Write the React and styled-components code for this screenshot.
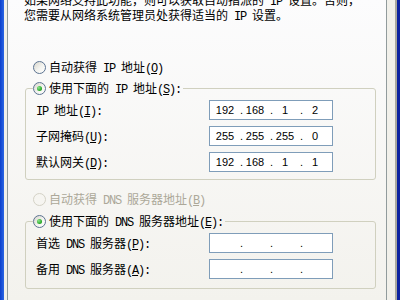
import React from 'react';
import styled, { createGlobalStyle } from 'styled-components';

const GlobalStyle = createGlobalStyle`
  html, body {
    margin: 0;
    padding: 0;
  }
  body {
    width: 400px;
    height: 300px;
    overflow: hidden;
    background: #ece9d8;
  }
`;

const Screen = styled.div`
  display: flex;
  width: 400px;
  height: 300px;
  overflow: hidden;
  font-family: 'Noto Sans CJK SC', sans-serif;
  font-size: 12px;
  color: #000;
`;

const FrameLeft = styled.div`
  flex: none;
  width: 4px;
  background: linear-gradient(to right, #0b3fcc, #2b66e4);
`;

const FrameRight = styled.div`
  flex: none;
  width: 3px;
  background: #0c22a0;
`;

const Gutter = styled.div`
  flex: none;
  width: ${({ $w }) => $w}px;
  background: #f1f0ea;
  border-right: ${({ $shadow }) => ($shadow ? '2px solid #a9a89f' : 'none')};
`;

const Panel = styled.div`
  flex: 1;
  min-width: 0;
  padding: 0 10px 0 16px;
  border-left: 1px solid #919b9c;
  border-right: 1px solid #919b9c;
  background: linear-gradient(to bottom, #fcfcfd, #f3f2ed);
  overflow: hidden;
`;

const Intro = styled.p`
  margin: -7px 0 0;
  line-height: 13px;
  white-space: nowrap;
`;

const Lt = styled.span`
  font-family: 'Liberation Mono', monospace;
  font-size: 12px;
  letter-spacing: -1.2px;
  line-height: 1;
  white-space: pre;
`;

const RadioRow = styled.div`
  display: flex;
  align-items: center;
  height: 14px;
  line-height: 14px;
  white-space: nowrap;
  margin: ${({ $mt }) => $mt || 0}px 0 0 ${({ $ml }) => $ml || 0}px;
  color: ${({ $disabled }) => ($disabled ? '#aca899' : '#000')};
`;

const Circle = styled.span`
  flex: none;
  display: flex;
  align-items: center;
  justify-content: center;
  box-sizing: border-box;
  width: 13px;
  height: 13px;
  margin-right: 3px;
  border-radius: 50%;
  border: 1px solid ${({ $disabled }) => ($disabled ? '#d4d2c6' : '#5c7391')};
  background: ${({ $disabled }) =>
    $disabled ? '#f6f5f1' : 'linear-gradient(135deg, #d8d6cc 0%, #f4f4f0 55%, #ffffff 100%)'};

  &::after {
    content: '';
    display: ${({ $checked }) => ($checked ? 'block' : 'none')};
    width: 5px;
    height: 5px;
    border-radius: 50%;
    background: radial-gradient(circle at 35% 35%, #8ae68a, #22a322 70%);
  }
`;

const Group = styled.fieldset`
  margin: ${({ $mt }) => $mt}px 0 0 1px;
  padding: 5px 0 ${({ $pb }) => $pb}px 7px;
  min-width: 0;
  border: 1px solid #d0d0bf;
  border-radius: 3px;
`;

const Legend = styled.legend`
  padding: 0 2px 0 0;
  margin: 0;
`;

const Grid = styled.div`
  display: grid;
  grid-template-columns: 173px 124px;
  row-gap: 6px;
  align-items: center;
  margin-left: 3px;
`;

const Label = styled.div`
  line-height: 14px;
  white-space: nowrap;
`;

const IpBox = styled.div`
  display: flex;
  align-items: center;
  box-sizing: border-box;
  width: 124px;
  height: 20px;
  padding-left: 3px;
  border: 1px solid #7f9db9;
  background: #fff;
  font-family: 'Liberation Sans', Arial, sans-serif;
  font-size: 11px;
  line-height: 18px;
`;

const Octet = styled.span`
  width: 24px;
  text-align: center;
`;

const Dot = styled.span`
  width: 6px;
  text-align: right;
`;

function Radio({ checked, disabled, children, ...rest }) {
  return (
    <RadioRow $disabled={disabled} {...rest}>
      <Circle $checked={checked} $disabled={disabled} />
      <span>{children}</span>
    </RadioRow>
  );
}

function IpField({ value = ['', '', '', ''] }) {
  return (
    <IpBox>
      {value.map((part, i) => (
        <React.Fragment key={i}>
          {i > 0 && <Dot>.</Dot>}
          <Octet>{part}</Octet>
        </React.Fragment>
      ))}
    </IpBox>
  );
}

export default function App() {
  return (
    <>
      <GlobalStyle />
      <Screen>
        <FrameLeft />
        <Gutter $w={3} />
        <Panel>
          <Intro>
            如果网络支持此功能，则可以获取自动指派的<Lt> IP </Lt>设置。否则，
            <br />
            您需要从网络系统管理员处获得适当的<Lt> IP </Lt>设置。
          </Intro>

          <Radio $mt={37} $ml={9}>
            自动获得<Lt> IP </Lt>地址<Lt>(<u>O</u>)</Lt>
          </Radio>

          <Group $mt={7} $pb={7}>
            <Legend>
              <Radio checked>
                使用下面的<Lt> IP </Lt>地址<Lt>(<u>S</u>):</Lt>
              </Radio>
            </Legend>
            <Grid>
              <Label>
                <Lt>IP </Lt>地址<Lt>(<u>I</u>):</Lt>
              </Label>
              <IpField value={['192', '168', '1', '2']} />
              <Label>
                子网掩码<Lt>(<u>U</u>):</Lt>
              </Label>
              <IpField value={['255', '255', '255', '0']} />
              <Label>
                默认网关<Lt>(<u>D</u>):</Lt>
              </Label>
              <IpField value={['192', '168', '1', '1']} />
            </Grid>
          </Group>

          <Radio disabled $mt={12} $ml={9}>
            自动获得<Lt> DNS </Lt>服务器地址<Lt>(<u>B</u>)</Lt>
          </Radio>

          <Group $mt={8} $pb={9}>
            <Legend>
              <Radio checked>
                使用下面的<Lt> DNS </Lt>服务器地址<Lt>(<u>E</u>):</Lt>
              </Radio>
            </Legend>
            <Grid>
              <Label>
                首选<Lt> DNS </Lt>服务器<Lt>(<u>P</u>):</Lt>
              </Label>
              <IpField />
              <Label>
                备用<Lt> DNS </Lt>服务器<Lt>(<u>A</u>):</Lt>
              </Label>
              <IpField />
            </Grid>
          </Group>
        </Panel>
        <Gutter $w={8} $shadow />
        <FrameRight />
      </Screen>
    </>
  );
}
